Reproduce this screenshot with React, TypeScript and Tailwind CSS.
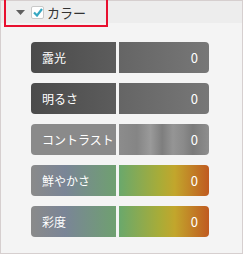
import React from 'react';

const font = { fontFamily: '"Noto Sans CJK JP", "Noto Sans", sans-serif' };

type Row = { label: string; left: string; right: string };

const rows: Row[] = [
  { label: '露光', left: 'bg-[linear-gradient(90deg,#4b4b4b,#5c5c5c)]', right: 'bg-[linear-gradient(90deg,#656565,#777777)]' },
  { label: '明るさ', left: 'bg-[linear-gradient(90deg,#4b4b4b,#5c5c5c)]', right: 'bg-[linear-gradient(90deg,#656565,#777777)]' },
  {
    label: 'コントラスト',
    left: 'bg-[#8a8a8a]',
    right:
      'bg-[linear-gradient(90deg,#8c8c8c_0%,#858585_20%,#9a9a9a_35%,#7e7e7e_48%,#959595_60%,#8a8a8a_72%,#7a7a7a_82%,#8e8e8e_100%)]',
  },
  {
    label: '鮮やかさ',
    left: 'bg-[linear-gradient(90deg,#8a8a8a_0%,#7a8597_40%,#6fa070_100%)]',
    right: 'bg-[linear-gradient(90deg,#6aa86c_0%,#a8ac38_45%,#c2a62c_62%,#c05a20_100%)]',
  },
  {
    label: '彩度',
    left: 'bg-[linear-gradient(90deg,#8a8a8a_0%,#7a8597_40%,#6fa070_100%)]',
    right: 'bg-[linear-gradient(90deg,#6aa86c_0%,#a8ac38_45%,#c2a62c_62%,#c05a20_100%)]',
  },
];

export default function App() {
  return (
    <div className="w-[244px] h-[255px] bg-white" style={font}>
      <div className="relative w-[243px] h-[254px] bg-[#f4f4f4] border border-[#d6cfcf]">
        {/* header */}
        <div className="h-[22px] bg-[#ededed] flex items-center pl-[15px]">
          <svg width="9" height="5" viewBox="0 0 9 5" className="mt-[1px]">
            <path d="M0 0 H9 L4.5 5 Z" fill="#5f5f5f" />
          </svg>
          <div className="ml-[6px] w-[13px] h-[13px] bg-white border border-[#c9c9c9] rounded-[2px] flex items-center justify-center">
            <svg width="10" height="9" viewBox="0 0 10 9">
              <path d="M1 4.5 L4 7.5 L9 1" stroke="#36a7c2" strokeWidth="2.2" fill="none" />
            </svg>
          </div>
          <span className="ml-[3px] text-[13px] leading-none text-[#333]">カラー</span>
        </div>

        {/* annotation box */}
        <div className="absolute left-[3px] top-[-3px] w-[104px] h-[29px] border-2 border-[#e8102f]" />

        {/* sliders */}
        <div className="pt-[19px] pl-[30px] flex flex-col gap-[10px]">
          {rows.map((r) => (
            <div key={r.label} className="flex h-[31px] w-[178px] text-white text-[12px]">
              <div className={`w-[85px] rounded-l-[4px] flex items-center pl-[11px] whitespace-nowrap ${r.left}`}>{r.label}</div>
              <div className={`ml-[3px] flex-1 rounded-r-[4px] flex items-center justify-end pr-[11px] text-[13px] ${r.right}`}>0</div>
            </div>
          ))}
        </div>
      </div>
    </div>
  );
}
